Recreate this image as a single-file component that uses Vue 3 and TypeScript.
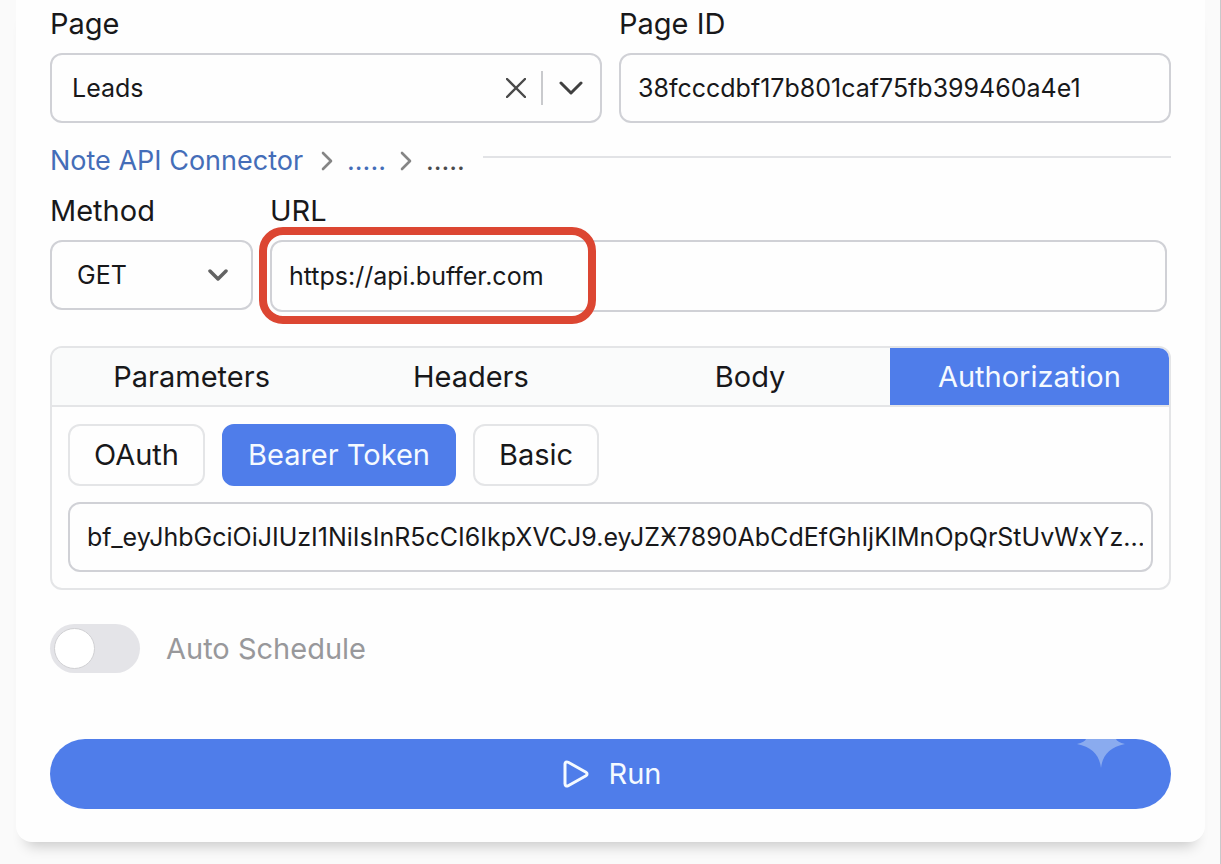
<script setup lang="ts">
import { ref } from 'vue'

const page = ref('Leads')
const pageId = ref('38fcccdbf17b801caf75fb399460a4e1')
const method = ref('GET')
const methods = ['GET', 'POST', 'PUT', 'PATCH', 'DELETE']
const url = ref('https://api.buffer.com')
const tabs = ['Parameters', 'Headers', 'Body', 'Authorization']
const activeTab = ref('Authorization')
const schemes = ['OAuth', 'Bearer Token', 'Basic']
const activeScheme = ref('Bearer Token')
const token = ref('bf_eyJhbGciOiJIUzI1NiIsInR5cCI6IkpXVCJ9.eyJZӾ7890AbCdEfGhIjKlMnOpQrStUvWxYz...')
const autoSchedule = ref(false)
</script>

<template>
  <div class="screen">
    <main class="card">
      <div class="pair">
        <div class="field">
          <label for="page">Page</label>
          <div class="box">
            <select id="page" v-model="page" class="page-select">
              <option value=""></option>
              <option>Leads</option>
            </select>
            <button class="clear" type="button" aria-label="Clear page" @click="page = ''">
              <svg width="20" height="20" viewBox="0 0 20 20"><path d="M1 1 19 19M19 1 1 19" /></svg>
            </button>
            <span class="divider"></span>
            <svg class="chevron" width="24" height="16" viewBox="0 0 24 16"><path d="M2 3 12 13 22 3" /></svg>
          </div>
        </div>
        <div class="field">
          <label for="page-id">Page ID</label>
          <input id="page-id" v-model="pageId" class="box" type="text" />
        </div>
      </div>

      <nav class="crumbs" aria-label="Breadcrumb">
        <a class="root" href="#">Note API Connector</a>
        <svg width="12" height="20" viewBox="0 0 12 20"><path d="M2 2 10 10 2 18" /></svg>
        <a href="#">.....</a>
        <svg width="12" height="20" viewBox="0 0 12 20"><path d="M2 2 10 10 2 18" /></svg>
        <span>.....</span>
        <span class="rule"></span>
      </nav>

      <div class="request">
        <div class="field method">
          <label for="method">Method</label>
          <div class="box">
            <select id="method" v-model="method" class="method-select">
              <option v-for="m in methods" :key="m">{{ m }}</option>
            </select>
            <svg class="chevron small" width="20" height="14" viewBox="0 0 20 14"><path d="M2 3 10 11 18 3" /></svg>
          </div>
        </div>
        <div class="field url">
          <label for="url">URL</label>
          <div class="url-wrap">
            <input id="url" v-model="url" class="box" type="text" />
            <span class="highlight"></span>
          </div>
        </div>
      </div>

      <section class="panel">
        <div class="tabs" role="tablist">
          <button
            v-for="t in tabs"
            :key="t"
            type="button"
            role="tab"
            :aria-selected="t === activeTab"
            :class="{ active: t === activeTab }"
            @click="activeTab = t"
          >{{ t }}</button>
        </div>
        <div class="auth">
          <div class="schemes">
            <button
              v-for="s in schemes"
              :key="s"
              type="button"
              :class="{ active: s === activeScheme }"
              @click="activeScheme = s"
            >{{ s }}</button>
          </div>
          <input v-model="token" class="box token" type="text" aria-label="Token" />
        </div>
      </section>

      <label class="toggle">
        <input v-model="autoSchedule" type="checkbox" role="switch" />
        <span>Auto Schedule</span>
      </label>

      <button class="run" type="button">
        <svg class="play" width="26" height="28" viewBox="0 0 26 28">
          <path d="M2 4.200C2 2.200 3.600 1.400 5.200 2.300L23 12.300C24.400 13.100 24.400 14.900 23 15.700L5.200 25.700C3.600 26.600 2 25.800 2 23.800Z" />
        </svg>
        <span>Run</span>
        <svg class="sparkle" width="48" height="29" viewBox="0 0 48 29">
          <path d="M9 0H39Q40 3 48 5C33 8 25.500 16 24 29C22.500 16 15 8 0 5Q8 3 9 0Z" />
        </svg>
      </button>
    </main>
  </div>
</template>

<style>
body {
  background: #fafafa;
}
</style>

<style scoped>
.screen {
  box-sizing: border-box;
  min-height: 100vh;
  padding: 0 16px 22px;
  overflow: hidden;
  box-shadow: inset -1px 0 #c9c9cb;
  color: #18181a;
  font-family: Inter, "Liberation Sans", sans-serif;
  font-size: 29px;
  line-height: 36px;
}

.screen *,
.screen *::before {
  box-sizing: border-box;
}

.card {
  padding: 6px 34px 33px;
  border-radius: 0 0 16px 16px;
  background: #fefefe;
  box-shadow: 0 14px 14px -10px rgba(0, 0, 0, 0.2);
}

button,
input,
select {
  margin: 0;
  color: inherit;
  font: inherit;
}

button {
  padding: 0;
  border: 0;
  background: none;
  cursor: pointer;
}

svg {
  flex: none;
  fill: none;
  stroke-linecap: round;
  stroke-linejoin: round;
}

.pair {
  display: grid;
  grid-template-columns: 1fr 1fr;
  gap: 17px;
}

.field {
  display: flex;
  flex-direction: column;
  gap: 11px;
  min-width: 0;
}

.box {
  display: flex;
  align-items: center;
  width: 100%;
  height: 70px;
  padding: 0 17px;
  border: 2px solid #d0d1d6;
  border-radius: 12px;
  background: #fefefe;
  font-size: 25px;
}

.box select {
  flex: 1;
  min-width: 0;
  height: 100%;
  border: 0;
  outline: 0;
  background: transparent;
  appearance: none;
}

.page-select {
  padding: 0 3px;
}

.clear {
  display: flex;
}

.clear svg {
  stroke: #4a4a4a;
  stroke-width: 2.4;
}

.divider {
  width: 2px;
  height: 34px;
  margin: 0 16px 0 15px;
  background: #c9cacd;
}

.chevron {
  pointer-events: none;
  stroke: #404040;
  stroke-width: 3;
}

.chevron.small {
  margin-right: 6px;
  stroke: #636363;
  stroke-width: 3.5;
}

.crumbs {
  display: flex;
  align-items: center;
  gap: 14px;
  margin-top: 20px;
  color: #4a4a4c;
  font-size: 27px;
}

.crumbs a {
  color: #446db8;
  text-decoration: none;
}

.crumbs .root {
  padding-right: 4px;
}

.crumbs svg {
  stroke: #858585;
  stroke-width: 2.6;
}

.rule {
  flex: 1;
  height: 2px;
  margin: 0 0 8px 4px;
  background: #e2e3e6;
}

.request {
  display: flex;
  gap: 17px;
  margin-top: 14px;
  padding-right: 4px;
}

.method {
  width: 203px;
}

.method-select {
  padding: 0 8px;
}

.url {
  flex: 1;
}

.url-wrap {
  position: relative;
}

.url .box {
  height: 72px;
}

.highlight {
  position: absolute;
  top: -13px;
  left: -11px;
  width: 337px;
  height: 97px;
  border: 8px solid #dc4632;
  border-radius: 24px;
  pointer-events: none;
}

.panel {
  margin-top: 34px;
  border: 2px solid #e4e5e7;
  border-radius: 12px;
  overflow: hidden;
}

.tabs {
  display: grid;
  grid-template-columns: repeat(4, 1fr);
  border-bottom: 2px solid #e4e5e7;
  background: #fafbfb;
}

.tabs button {
  height: 57px;
}

.tabs .active,
.schemes .active {
  border-color: #4f7dea;
  background: #4f7dea;
  color: #f5faff;
}

.auth {
  padding: 17px 16px 16px;
}

.auth .token {
  padding-right: 8px;
}

.schemes {
  display: flex;
  gap: 17px;
  margin-bottom: 16px;
}

.schemes button {
  height: 62px;
  padding: 0 24px;
  border: 2px solid #e4e5e7;
  border-radius: 12px;
}

.toggle {
  display: flex;
  align-items: center;
  gap: 26px;
  width: fit-content;
  margin-top: 34px;
  color: #98989b;
}

.toggle input {
  display: flex;
  align-items: center;
  width: 90px;
  height: 49px;
  padding: 0 4px;
  border-radius: 25px;
  background: #e4e4e8;
  appearance: none;
}

.toggle input::before {
  width: 41px;
  height: 41px;
  border: 1px solid #d0d0d3;
  border-radius: 50%;
  background: #fff;
  content: "";
}

.toggle input:checked {
  justify-content: flex-end;
  background: #4f7dea;
}

.run {
  position: relative;
  display: flex;
  align-items: center;
  justify-content: center;
  gap: 20px;
  width: 100%;
  height: 70px;
  margin-top: 66px;
  padding-left: 3px;
  border-radius: 35px;
  background: #4f7dea;
  color: #f5faff;
}

.play {
  stroke: currentColor;
  stroke-width: 3;
}

.sparkle {
  position: absolute;
  top: 0;
  right: 46px;
  fill: #8aabef;
}
</style>
